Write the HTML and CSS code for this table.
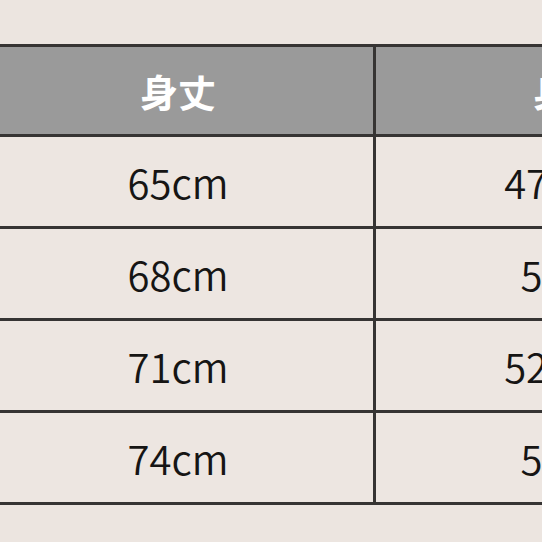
FILE: index.html
```html
<!DOCTYPE html>
<html lang="ja">
<head>
<meta charset="utf-8">
<link rel="stylesheet" href="styles.css">
</head>
<body>
<div class="page">
  <div class="size-table">
    <div class="cell head">身丈</div>
    <div class="cell head">身幅</div>
    <div class="cell">65cm</div>
    <div class="cell">47.5cm</div>
    <div class="cell">68cm</div>
    <div class="cell">50cm</div>
    <div class="cell">71cm</div>
    <div class="cell">52.5cm</div>
    <div class="cell">74cm</div>
    <div class="cell">55cm</div>
  </div>
</div>
</body>
</html>
```
FILE: styles.css
```css
html, body {
  margin: 0;
  padding: 0;
  background: #ece5e0;
  overflow: hidden;
}
.page {
  width: 542px;
  height: 542px;
  overflow: hidden;
  padding-top: 44px;
  box-sizing: border-box;
}
.size-table {
  display: grid;
  grid-template-columns: 390px 390px;
  grid-template-rows: 87px 89px 89px 89px 89px;
  gap: 3px;
  padding: 3px;
  background: #363433;
  width: max-content;
  margin-left: -20px;
}
.cell {
  background: #ede6e1;
  display: flex;
  align-items: center;
  justify-content: center;
  font-family: "Noto Sans CJK JP", "Noto Sans", sans-serif;
  font-size: 40px;
  font-weight: 350;
  color: #161514;
}
.cell.head {
  background: #9a9a9a;
  color: #ffffff;
  font-weight: bold;
  font-size: 38px;
}
```
